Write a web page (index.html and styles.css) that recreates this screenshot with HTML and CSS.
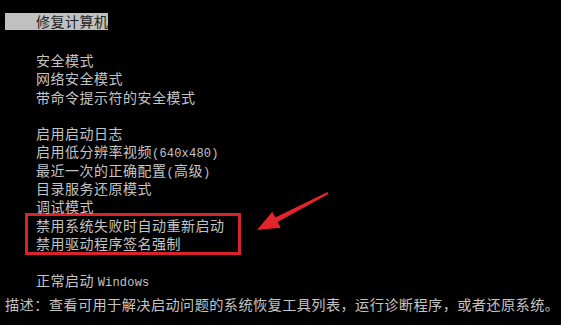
FILE: index.html
```html
<!DOCTYPE html>
<html>
  <head>
    <meta charset="UTF-8">
    <title>高级启动选项</title>
    <link rel="stylesheet" href="styles.css">
  </head>
  <body>
    <div id="pantalla">
      <div class="titulo">修复计算机</div>
      <ul class="menu">
        <li>安全模式</li>
        <li>网络安全模式</li>
        <li>带命令提示符的安全模式</li>
        <li class="vacio"></li>
        <li>启用启动日志</li>
        <li>启用低分辨率视频<span class="ascii">(640x480)</span></li>
        <li>最近一次的正确配置<span class="ascii">(</span>高级<span class="ascii">)</span></li>
        <li>目录服务还原模式</li>
        <li>调试模式</li>
        <li class="marcado">
          <div>禁用系统失败时自动重新启动</div>
          <div>禁用驱动程序签名强制</div>
        </li>
        <li class="vacio"></li>
        <li>正常启动 <span class="ascii">Windows</span></li>
      </ul>
      <p class="descripcion">描述：查看可用于解决启动问题的系统恢复工具列表，运行诊断程序，或者还原系统。</p>

      <!-- flecha roja de la anotacion -->
      <svg class="flecha" width="561" height="325" viewBox="0 0 561 325">
        <polygon fill="#e3242b" points="257,230 280.7,227.8 277.7,222 328.5,193.9 327.5,192.1 275.3,217.6 272.3,211.8"/>
      </svg>
    </div>
  </body>
</html>
```

FILE: styles.css
```css
html, body {
  margin: 0;
  background-color: #000;
}

#pantalla {
  position: relative;
  width: 561px;
  height: 325px;
  overflow: hidden;
  background-color: #000;
  color: #c4c4c4;
  font-family: "Noto Sans CJK SC", sans-serif;
  font-size: 14px;
  letter-spacing: 0.5px;
}

.titulo {
  margin: 13px 0 0 5px;
  width: 103px;
  height: 17px;
  line-height: 17px;
  padding-left: 31px;
  box-sizing: border-box;
  background-color: #c0c0c0;
  color: #222;
  white-space: nowrap;
}

.menu {
  list-style: none;
  margin: 21px 0 0 0;
  padding: 0 0 0 36px;
  line-height: 18.3px;
}

.menu li {
  height: 18.3px;
  white-space: nowrap;
}

.menu li.marcado {
  height: auto;
  width: 216px;
  box-sizing: border-box;
  margin: -3px 0 -3px -11px;
  padding-left: 8px;
  border: 3px solid #d9232a;
}

.marcado div {
  height: 18.3px;
}

.ascii {
  font-family: "Liberation Mono", monospace;
  font-size: 12px;
  letter-spacing: 0.2px;
}

.descripcion {
  margin: 6px 0 0 5px;
  line-height: 18px;
  font-size: 14.2px;
  letter-spacing: 0.4px;
  white-space: nowrap;
}

.flecha {
  position: absolute;
  left: 0;
  top: 0;
  pointer-events: none;
}
```
